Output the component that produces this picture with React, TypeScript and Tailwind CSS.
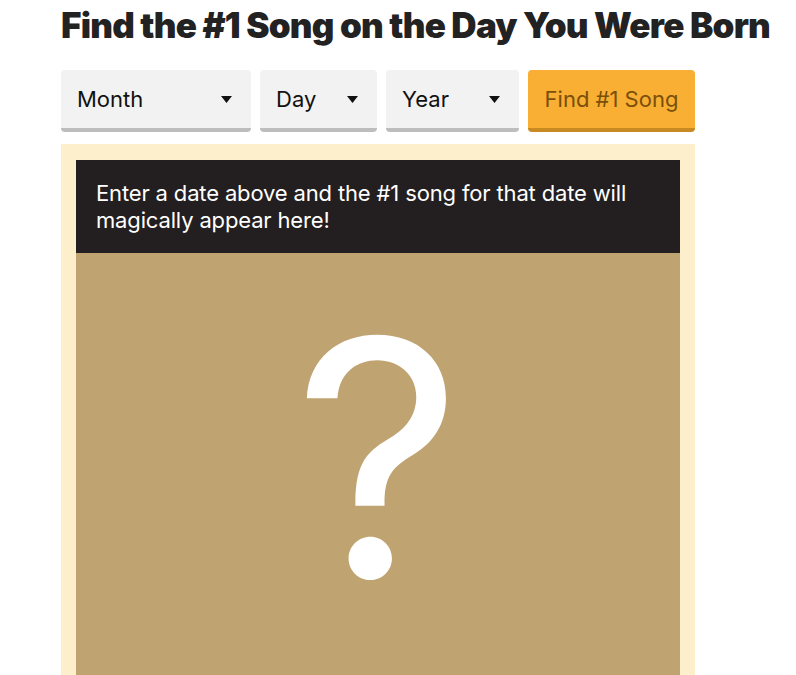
import { useState } from "react";

function Caret() {
  return (
    <svg width="11" height="7" viewBox="0 0 11 7" className="shrink-0">
      <path d="M0 0 L11 0 L5.5 7 Z" fill="#111" />
    </svg>
  );
}

function SelectBox({ label, width }: { label: string; width: string }) {
  return (
    <div
      className={`${width} h-[62px] flex items-center justify-between pl-[16px] pr-[19px] bg-[#f2f2f2] rounded-[4px] border-b-[4px] border-[#bdbdbd] text-[22px] text-[#111] cursor-pointer`}
    >
      <span>{label}</span>
      <Caret />
    </div>
  );
}

export default function App() {
  const [picked] = useState(false);
  return (
    <div className="w-[796px] h-[675px] overflow-hidden bg-white font-['Inter',sans-serif]">
      <div className="pl-[61px] pt-[2px]">
        <h1 className="text-[35px] leading-[46px] font-black tracking-[-0.75px] text-[#222] whitespace-nowrap">
          Find the #1 Song on the Day You Were Born
        </h1>
        <div className="flex gap-[9px] mt-[22px]">
          <SelectBox label="Month" width="w-[190px]" />
          <SelectBox label="Day" width="w-[117px]" />
          <SelectBox label="Year" width="w-[133px]" />
          <button className="w-[167px] h-[62px] bg-[#f8af33] rounded-[4px] border-b-[4px] border-[#c98b21] text-[22px] text-[#7a4f0a]">
            Find #1 Song
          </button>
        </div>
        <div className="w-[634px] mt-[12px] bg-[#feefcc] px-[15px] pt-[16px] h-[600px]">
          <div className="bg-[#231f20] h-[93px] px-[20px] pt-[20px] text-[22px] leading-[27px] tracking-[-0.15px] text-white">
            Enter a date above and the #1 song for that date will magically appear here!
          </div>
          <div className="bg-[#bfa370] h-[500px] flex justify-center">
            {!picked && (
              <span className="text-[330px] leading-none text-white font-normal mt-[40px]">?</span>
            )}
          </div>
        </div>
      </div>
    </div>
  );
}
